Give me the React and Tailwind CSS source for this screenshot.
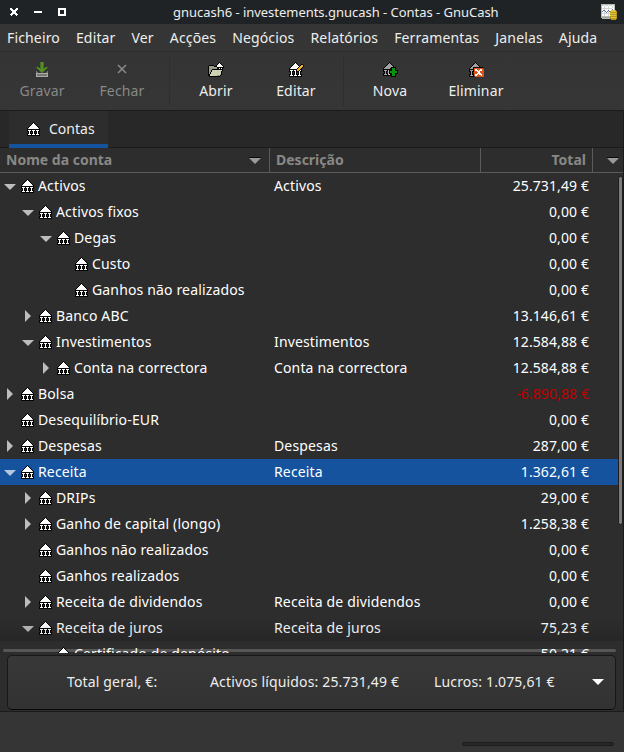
import React from "react";

const PALETTE = {
  k: "#050505", w: "#ffffff", l: "#d4d4d4", g: "#a0a0a0", d: "#4c4c4c",
  c: "#ccd2b4", b: "#979d84", n: "#5a9a22", m: "#44761f", e: "#0b930b", o: "#d8541c",
  y: "#f2b234", s: "#7c7e7a", a: "#b9b9b4", u: "#5f7ba6", t: "#b8981c", h: "#e0c640",
};

const BANK = [
  "......k......",
  ".....kwk.....",
  "....kwwwk....",
  "...kwwwwwk...",
  "..kwwwwwwwk..",
  ".kwwwwwwwwwk.",
  "klwwwwwwwwwlk",
  "kkkkkkkkkkkkk",
  "kwwwkwwwkwwwk",
  "kkwkkkwkkkwkk",
  ".kwk.kwk.kwk.",
  "kkwkkkwkkkwkk",
  "kwwwkwwwkwwwk",
  "kkkkkkkkkkkkk",
];

const OPEN = [
  "...........k....",
  "..........kwk...",
  ".........kwwwk..",
  ".kkkkk..kwwwwwk.",
  "kbbbbbkkkwwwwwwk",
  "kbbbbbbbbkkkkkkk",
  "kbbbbbbbbkkwkwk.",
  "kbbbkkkkkkkkkkk.",
  "kbbkcccccccccck.",
  "kbbkccccccccck..",
  "kbkcccccccccck..",
  "kbkcccccccccck..",
  "kkccccccccccbk..",
  "kkcccccccbbbk...",
  ".kkkkkkkkkkk....",
];

const EDIT = [
  "......k........",
  ".....kwk.......",
  "....kwwwk...kk.",
  "...kwwwwwk.kyyk",
  "..kwwwwwwwkyyyk",
  ".kwwwwwwwkyyyk.",
  "klwwwwwwkyyyk..",
  "kkkkkkkkyyykk..",
  "kwwwkwwkyykwk..",
  "kkwkkkwkkkwkk..",
  ".kwk.kwk.kwk...",
  ".kwk.kwk.kwk...",
  "kkwkkkwkkkwkk..",
  "kwwwkwwwkwwwk..",
  "kkkkkkkkkkkkk..",
];

const ADD = [
  "......k........",
  ".....kgk.......",
  "....kgggk......",
  "...kgggggk.....",
  "..kgggggggk....",
  ".kggggggkkkkk..",
  "kggggggkkeeek..",
  "kkkkkkkkkeeek..",
  "kgggkgkkkeeekkk",
  "kkgkklkeeeeeeek",
  ".kgk.gkeeeeeeek",
  "kkgkklkkkeeekkk",
  "kgggkglkkeeek..",
  "kkkkkkkkkeeek..",
  "........kkkkk..",
];

const REMOVE = [
  "......k........",
  ".....kgk.......",
  "....kgggk......",
  "...kgggggk.....",
  "..kgggggggk....",
  ".kggkkkkkkkkkk.",
  "kgggkooooooooo.",
  "kkkkkowwoooww o",
  "kgggkowwwowwwoo",
  "kkgkkooowwwoooo",
  ".kgk.oooowwoooo",
  ".kgk.ooowwwwooo",
  "kkgkkowwwowwwoo",
  "kgggkowwoooowoo",
  "kkkkk.ooooooooo",
].map((r) => r.replace(" ", "o").slice(0, 15));

const SAVE = [
  "....mnnm....",
  "....mnnm....",
  "....mnnm....",
  "....mnnm....",
  "....mnnm....",
  "mnm.mnnm.mnm",
  ".mnnmnnmnnm.",
  "..mnnnnnnm..",
  "...mnnnnm...",
  "s...mnnm...s",
  "ss...mm...ss",
  "aaaaaaaaaaaa",
  "assssssssssa",
  "assssssssssa",
  "aaaaaaaaaaaa",
];

const LEDGER = [
  "aaaaaaaaaaaaaa..",
  "allwlllwlllwla..",
  "awwlwwwlwwwlwa..",
  "awwlwwwlwwwlwa..",
  "allllllllllwwa..",
  "awwlwwwlwwwuwa..",
  "awuuwwwuwwhhhht.",
  "auwluwuluthhhhht",
  "awwlwuwlwttttttt",
  "allllllllhhhhhht",
  "awwlwwwlwttttttt",
  "awwlwwwlwhhhhhht",
  "aaaaaaaaattttttt",
  "aggggggggthhhhht",
  ".aaaaaaaattttttt",
  "..........ttttt.",
];

function PixelIcon({ map, className = "" }) {
  const w = map[0].length;
  return (
    <svg width={w} height={map.length} shapeRendering="crispEdges" className={"block shrink-0 " + className}>
      {map.flatMap((row, y) =>
        [...row].map((ch, x) =>
          PALETTE[ch] ? <rect key={x + "-" + y} x={x} y={y} width="1" height="1" fill={PALETTE[ch]} /> : null
        )
      )}
    </svg>
  );
}

function Down({ className = "", edge = false }) {
  return (
    <svg width="12" height="7" className={"block shrink-0 fill-current " + className}>
      {edge && <path d="M0 0H12V1H0Z" fill="#0c0c0c" />}
      <path d="M0 1H12L6 7Z" />
    </svg>
  );
}

function Right({ className = "" }) {
  return (
    <svg width="6" height="12" className={"block shrink-0 fill-current " + className}>
      <path d="M0 0L6 6L0 12Z" />
    </svg>
  );
}

const ROWS = [
  [0, "open", "Activos", "Activos", "25.731,49 €"],
  [1, "open", "Activos fixos", "", "0,00 €"],
  [2, "open", "Degas", "", "0,00 €"],
  [3, "", "Custo", "", "0,00 €"],
  [3, "", "Ganhos não realizados", "", "0,00 €"],
  [1, "shut", "Banco ABC", "", "13.146,61 €"],
  [1, "open", "Investimentos", "Investimentos", "12.584,88 €"],
  [2, "shut", "Conta na correctora", "Conta na correctora", "12.584,88 €"],
  [0, "shut", "Bolsa", "", "-6.890,88 €"],
  [0, "", "Desequilíbrio-EUR", "", "0,00 €"],
  [0, "shut", "Despesas", "Despesas", "287,00 €"],
  [0, "open", "Receita", "Receita", "1.362,61 €"],
  [1, "shut", "DRIPs", "", "29,00 €"],
  [1, "shut", "Ganho de capital (longo)", "", "1.258,38 €"],
  [1, "", "Ganhos não realizados", "", "0,00 €"],
  [1, "", "Ganhos realizados", "", "0,00 €"],
  [1, "shut", "Receita de dividendos", "Receita de dividendos", "0,00 €"],
  [1, "open", "Receita de juros", "Receita de juros", "75,23 €"],
  [2, "", "Certificado de depósito", "", "50,21 €"],
];

const INDENT = ["pl-0", "pl-[18px]", "pl-[36px]", "pl-[54px]"];

function Row({ row }) {
  const [level, state, name, desc, total] = row;
  const selected = name === "Receita";
  return (
    <div className={"relative flex h-[26px] shrink-0 items-center text-white " + (selected ? "bg-[#15539e]" : "")}>
      <div className={"flex w-[274px] items-center " + INDENT[level]}>
        <div className={"flex w-[21px] items-center " + (selected ? "text-[#b5c7e0]" : "text-[#bdbdbb]")}>
          {state === "open" && <Down className="ml-1" />}
          {state === "shut" && <Right className="ml-[7px]" />}
        </div>
        <PixelIcon map={BANK} className="mr-1" />
        <span>{name}</span>
      </div>
      <div className="w-[206px]">{desc}</div>
      <div className={"w-[109px] text-right tracking-[0.1px] " + (total[0] === "-" ? "text-[#c00000]" : "")}>{total}</div>
    </div>
  );
}

function Tool({ label, width, disabled, children }) {
  return (
    <div className={"flex h-full flex-col items-center " + width + (disabled ? " text-[#888886]" : "")}>
      <div className="flex h-[28px] items-end justify-center pb-[3px]">{children}</div>
      <div className="leading-[21px]">{label}</div>
    </div>
  );
}

export default function App() {
  return (
    <div className="flex h-[752px] w-[624px] flex-col overflow-hidden bg-[#353535] font-['Noto_Sans',sans-serif] text-[14px] leading-5 tracking-[0.15px] whitespace-nowrap text-[#eeeeec]">
      <div className="flex h-6 shrink-0 items-center bg-[#1f2326] text-[13px] tracking-[-0.03px]">
        <div className="flex w-[173px] items-center pl-[10px]">
          <svg width="56" height="8" className="block" shapeRendering="crispEdges" fill="none" stroke="#fff">
            <path d="M0.5 0.5L7.5 7.5M7.5 0.5L0.5 7.5" strokeWidth="2.2" />
            <path d="M24 4H32" strokeWidth="2" />
            <path d="M49 1H55V7H49Z" strokeWidth="2" />
          </svg>
        </div>
        <div className="flex-1">gnucash6 - investements.gnucash - Contas - GnuCash</div>
        <PixelIcon map={LEDGER} className="mr-[7px]" />
      </div>

      <div className="flex h-7 shrink-0 items-center gap-4 border-b border-[#2d2d2d] pl-[7px]">
        {["Ficheiro", "Editar", "Ver", "Acções", "Negócios", "Relatórios", "Ferramentas", "Janelas", "Ajuda"].map((m) => (
          <span key={m}>{m}</span>
        ))}
      </div>

      <div className="flex h-[58px] shrink-0 bg-linear-to-b from-[#343434] to-[#363636] pl-[2px]">
        <Tool label="Gravar" width="w-20" disabled><PixelIcon map={SAVE} className="opacity-90" /></Tool>
        <Tool label="Fechar" width="w-20" disabled>
          <svg width="10" height="15" fill="none" stroke="#888886" strokeWidth="1.6"><path d="M1 3L9 11M9 3L1 11" /></svg>
        </Tool>
        <div className="mx-[6.5px] my-1 w-px bg-[#2f2f2f]" />
        <Tool label="Abrir" width="w-20"><PixelIcon map={OPEN} /></Tool>
        <Tool label="Editar" width="w-20"><PixelIcon map={EDIT} /></Tool>
        <div className="mx-[6.5px] my-1 w-px bg-[#2f2f2f]" />
        <Tool label="Nova" width="w-20"><PixelIcon map={ADD} /></Tool>
        <Tool label="Eliminar" width="w-[92px]"><PixelIcon map={REMOVE} /></Tool>
      </div>

      <div className="flex h-[602px] shrink-0 flex-col border-y border-r border-[#1b1b1b] bg-[#2d2d2d]">
        <div className="flex h-[37px] shrink-0 border-b border-[#1b1b1b] bg-[#282828] pl-[9px]">
          <div className="-mb-px flex h-[37px] w-[99px] items-center gap-[9px] border-b-4 border-[#15539e] bg-[#2d2d2d] pt-[2px] pl-[18px] tracking-normal">
            <PixelIcon map={BANK} />
            <span>Contas</span>
          </div>
        </div>

        <div className="flex h-[25px] shrink-0 border-b border-[#5a5a5a] font-bold leading-6 tracking-normal text-[#888886]">
          <div className="flex w-[270px] items-center justify-between border-r border-[#5a5a5a] pr-2 pl-[6px]">
            <span>Nome da conta</span>
            <Down edge className="text-[#9a9a98]" />
          </div>
          <div className="w-[211px] border-r border-[#5a5a5a] pl-[6px]">Descrição</div>
          <div className="w-[112px] border-r border-[#5a5a5a] pr-[6px] text-right">Total</div>
          <div className="flex flex-1 items-center pl-[14px]"><Down edge className="text-[#9a9a98]" /></div>
        </div>

        <div className="relative flex h-[480px] shrink-0 flex-col overflow-hidden">
          <div className="absolute bottom-px left-[3px] h-[3px] w-[613px] rounded-full bg-[#565656]" />
          {ROWS.map((r, i) => <Row key={i} row={r} />)}
          <div className="absolute inset-x-0 bottom-3 h-6 bg-linear-to-b from-transparent to-black/15" />
          <div className="absolute top-[3px] right-0 h-[349px] w-[5px] rounded-full border border-[#1e1e1e] bg-[#7c7c7c]" />
        </div>

        <div className="mx-[7px] mt-[2px] flex h-[55px] w-[609px] shrink-0 items-center rounded-[5px] border border-[#181818] border-b-[#080808] bg-[#343434] bg-linear-to-b from-[#383838] to-[#323232] pb-[2px]">
          <span className="w-[143px] pl-[59px]">Total geral, €:</span>
          <span className="ml-[59px] w-[224px]">Activos líquidos: 25.731,49 €</span>
          <span className="w-[158px]">Lucros: 1.075,61 €</span>
          <Down className="text-white" />
        </div>
      </div>

      <div className="flex flex-1 items-end justify-end pr-[10px] pb-[6px]">
        <div className="h-1 w-[152px] rounded-full border border-[#1d1d1d] bg-[#282828]" />
      </div>
    </div>
  );
}
